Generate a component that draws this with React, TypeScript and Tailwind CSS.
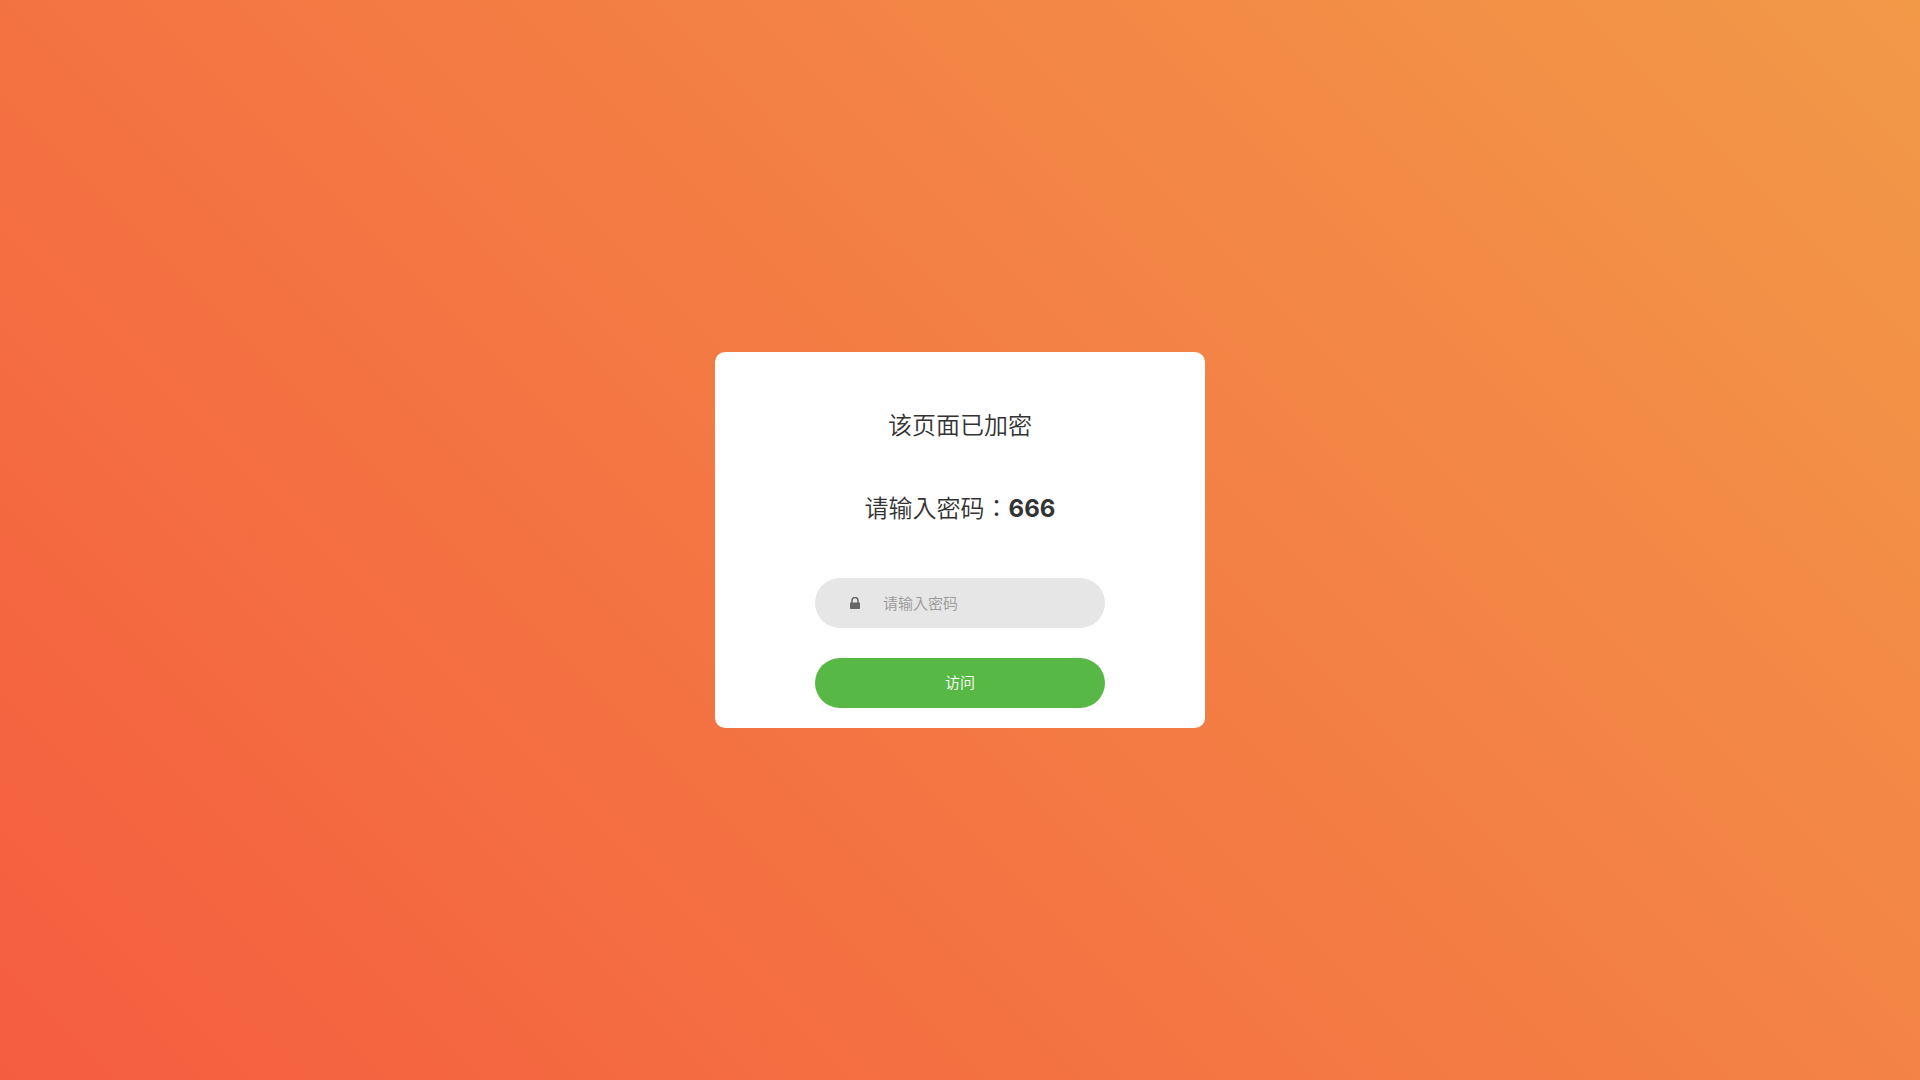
import React from "react";

export default function App() {
  return (
    <main className="flex min-h-screen items-center justify-center bg-[linear-gradient(45deg,#f55d3f,#f29948)] p-4 font-['Inter','Noto_Sans_CJK_JP',sans-serif] font-[350]">
      <form
        className="flex w-full max-w-[490px] flex-col items-center rounded-[10px] bg-white px-[100px] pt-14 pb-5"
        onSubmit={(e) => e.preventDefault()}
      >
        <h1 className="text-center text-2xl leading-9 font-[350] text-[#333333]">该页面已加密</h1>
        <p className="mt-[47px] text-center text-2xl leading-9 text-[#333333]">
          请输入密码：<b className="font-bold">666</b>
        </p>
        <div className="mt-[51px] flex h-[50px] w-full items-center rounded-full bg-[#e6e6e6] pl-[35px]">
          <svg viewBox="0 0 10 12" className="h-3 w-[10px] text-[#666666]" aria-hidden="true">
            <rect x="0" y="5.5" width="10" height="6.5" rx="0.7" fill="currentColor" />
            <path d="M2 6V3.5a3 3 0 0 1 6 0V6" fill="none" stroke="currentColor" strokeWidth="1.5" />
          </svg>
          <input
            type="password"
            aria-label="请输入密码"
            placeholder="请输入密码"
            className="h-full min-w-0 flex-1 bg-transparent pr-[30px] pl-[23px] text-[15px] leading-[18px] text-[#666666] outline-none placeholder:text-[#999999]"
          />
        </div>
        <button type="submit" className="mt-[30px] h-[50px] w-full cursor-pointer rounded-full bg-[#57b846] text-[15px] leading-[18px] text-white">
          访问
        </button>
      </form>
    </main>
  );
}
